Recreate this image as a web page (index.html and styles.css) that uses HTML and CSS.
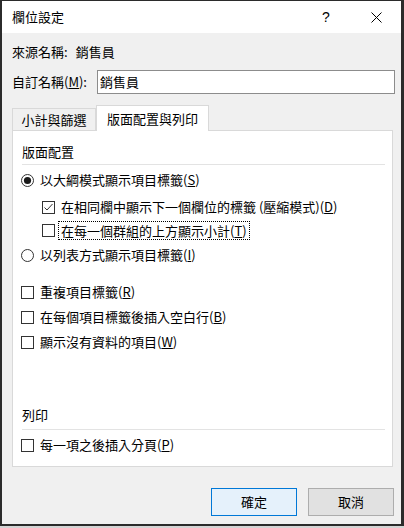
FILE: index.html
```html
<!DOCTYPE html>
<html lang="zh-Hant">
<head>
<meta charset="utf-8">
<title>欄位設定</title>
<link rel="stylesheet" href="styles.css">
</head>
<body>
<div class="window">
  <div class="titlebar">
    <span class="title">欄位設定</span>
    <span class="tb-btn help">?</span>
    <span class="tb-btn close">
      <svg width="11" height="11" viewBox="0 0 11 11"><path d="M0.5 0.5 L10.5 10.5 M10.5 0.5 L0.5 10.5" stroke="#000" stroke-width="1" fill="none"/></svg>
    </span>
  </div>
  <div class="content">
    <div class="source-row"><span>來源名稱:</span><span class="source-val">銷售員</span></div>
    <div class="name-row">
      <span class="name-label">自訂名稱(<u>M</u>):</span>
      <div class="input">銷售員</div>
    </div>
    <div class="tabs">
      <div class="tab">小計與篩選</div>
      <div class="tab active">版面配置與列印</div>
    </div>
    <div class="panel">
      <div class="group-title">版面配置</div>
      <div class="sep"></div>
      <div class="opt r1">
        <svg class="ico" width="13" height="13" viewBox="0 0 13 13"><circle cx="6.5" cy="6.5" r="6" fill="#fff" stroke="#333" stroke-width="1"/><circle cx="6.5" cy="6.5" r="3.6" fill="#1a1a1a"/></svg>
        <span>以大綱模式顯示項目標籤(<u>S</u>)</span>
      </div>
      <div class="opt sub c1">
        <svg class="ico" width="13" height="13" viewBox="0 0 13 13"><rect x="0.5" y="0.5" width="12" height="12" fill="#fff" stroke="#333"/><path d="M2.5 6.5 L5 9 L10.5 3" fill="none" stroke="#333" stroke-width="1"/></svg>
        <span>在相同欄中顯示下一個欄位的標籤 (壓縮模式)(<u>D</u>)</span>
      </div>
      <div class="opt sub c2">
        <svg class="ico" width="13" height="13" viewBox="0 0 13 13"><rect x="0.5" y="0.5" width="12" height="12" fill="#fff" stroke="#333"/></svg>
        <span class="focus">在每一個群組的上方顯示小計(<u>T</u>)</span>
      </div>
      <div class="opt r2">
        <svg class="ico" width="13" height="13" viewBox="0 0 13 13"><circle cx="6.5" cy="6.5" r="6" fill="#fff" stroke="#333" stroke-width="1"/></svg>
        <span>以列表方式顯示項目標籤(<u>I</u>)</span>
      </div>
      <div class="opt c3">
        <svg class="ico" width="13" height="13" viewBox="0 0 13 13"><rect x="0.5" y="0.5" width="12" height="12" fill="#fff" stroke="#333"/></svg>
        <span>重複項目標籤(<u>R</u>)</span>
      </div>
      <div class="opt c4">
        <svg class="ico" width="13" height="13" viewBox="0 0 13 13"><rect x="0.5" y="0.5" width="12" height="12" fill="#fff" stroke="#333"/></svg>
        <span>在每個項目標籤後插入空白行(<u>B</u>)</span>
      </div>
      <div class="opt c4">
        <svg class="ico" width="13" height="13" viewBox="0 0 13 13"><rect x="0.5" y="0.5" width="12" height="12" fill="#fff" stroke="#333"/></svg>
        <span>顯示沒有資料的項目(<u>W</u>)</span>
      </div>
      <div class="group-title print">列印</div>
      <div class="sep sep2"></div>
      <div class="opt c5">
        <svg class="ico" width="13" height="13" viewBox="0 0 13 13"><rect x="0.5" y="0.5" width="12" height="12" fill="#fff" stroke="#333"/></svg>
        <span>每一項之後插入分頁(<u>P</u>)</span>
      </div>
    </div>
    <div class="buttons">
      <div class="btn primary">確定</div>
      <div class="btn">取消</div>
    </div>
  </div>
</div>
</body>
</html>
```
FILE: styles.css
```css
html, body {
  margin: 0;
  padding: 0;
  background: #d4d4d4;
}
body {
  font-family: "Noto Sans CJK TC", "Noto Sans", sans-serif;
  font-size: 13px;
  color: #000;
}
.window {
  box-sizing: border-box;
  width: 404px;
  height: 526px;
  border-style: solid;
  border-color: #2b2b2b;
  border-width: 1px 3px 2px 2px;
  background: #f0f0f0;
}
.titlebar {
  height: 32px;
  background: #fff;
  display: flex;
  align-items: center;
}
.title {
  flex: 1;
  padding-left: 10px;
  line-height: 20px;
}
.tb-btn {
  width: 50px;
  height: 32px;
  display: flex;
  align-items: center;
  justify-content: center;
}
.help {
  font-family: "Liberation Sans", "DejaVu Sans", sans-serif;
  font-size: 14px;
}
.content {
  padding: 9px 7px 0 10px;
}
.source-row {
  display: flex;
  height: 20px;
  line-height: 20px;
}
.source-val {
  margin-left: 8px;
}
.name-row {
  margin-top: 8px;
  display: flex;
  align-items: center;
  height: 24px;
}
.name-label {
  width: 85px;
  line-height: 20px;
}
.input {
  flex: 1;
  margin-right: -1px;
  box-sizing: border-box;
  height: 24px;
  border: 1px solid #8c8c8c;
  background: #fff;
  padding-left: 2px;
  line-height: 21px;
}
.tabs {
  margin-top: 11px;
  height: 25px;
  display: flex;
  align-items: flex-end;
}
.tab {
  box-sizing: border-box;
  width: 84px;
  height: 22px;
  border: 1px solid #d9d9d9;
  border-bottom: none;
  background: #f0f0f0;
  text-align: center;
  line-height: 21px;
}
.tab.active {
  position: relative;
  z-index: 1;
  width: 113px;
  height: 26px;
  margin-bottom: -1px;
  background: #fff;
  line-height: 25px;
}
.panel {
  margin-right: 1px;
  border: 1px solid #d9d9d9;
  background: #fff;
  padding: 11px 7px 11px 8px;
}
.group-title {
  margin-left: 1px;
  line-height: 20px;
  height: 20px;
}
.sep {
  margin-top: 2px;
  margin-left: 1px;
  height: 1px;
  background: #e3e3e3;
}
.opt {
  display: flex;
  align-items: center;
  height: 20px;
  line-height: 20px;
}
.ico {
  flex: none;
  margin-right: 6px;
}
.sub {
  margin-left: 21px;
}
.r1 { margin-top: 5px; }
.c1 { margin-top: 7px; }
.c2 { margin-top: 3px; }
.c2 .ico { margin-right: 3px; }
.focus {
  border: 1px dotted #000;
  padding: 0 2px;
  line-height: 17px;
}
.r2 { margin-top: 5px; }
.c3 { margin-top: 17px; }
.c4 { margin-top: 5px; }
.print { margin-top: 53px; }
.sep2 { margin-top: 4px; }
.c5 { margin-top: 5px; }
.buttons {
  margin-top: 21px;
  display: flex;
  justify-content: flex-end;
  gap: 11px;
}
.btn {
  box-sizing: border-box;
  width: 86px;
  height: 28px;
  border: 1px solid #adadad;
  background: #e1e1e1;
  text-align: center;
  line-height: 26px;
}
.btn.primary {
  border-color: #0078d7;
  background: #e5f1fb;
}
```
